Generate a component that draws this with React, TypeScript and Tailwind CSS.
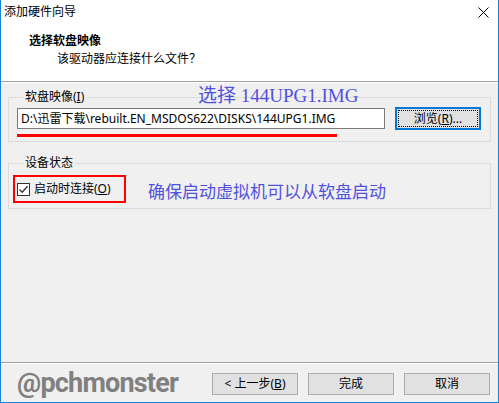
import React from "react";

const UI_FONT = "font-['Segoe_UI','Noto_Sans','Noto_Sans_CJK_SC',sans-serif]";

function WinButton({
  children,
  focused = false,
  className = "",
}: {
  children: React.ReactNode;
  focused?: boolean;
  className?: string;
}) {
  return (
    <button
      type="button"
      className={
        "flex h-[22px] items-center justify-center bg-[#e1e1e1] text-[12px] text-black " +
        (focused ? "border-2 border-[#0078d7] p-[1px]" : "border border-[#adadad]") +
        " " +
        className
      }
    >
      {focused ? (
        <span className="flex h-full w-full items-center justify-center border border-dotted border-black">
          {children}
        </span>
      ) : (
        children
      )}
    </button>
  );
}

function CloseIcon() {
  return (
    <svg width="11" height="11" viewBox="0 0 11 11" className="text-black">
      <path d="M0.5 0.5 L10.5 10.5 M10.5 0.5 L0.5 10.5" stroke="currentColor" strokeWidth="1" fill="none" />
    </svg>
  );
}

export default function App() {
  return (
    <div
      className={`flex h-[403px] w-[499px] flex-col border-x border-b border-[#1883d7] bg-[#f0f0f0] ${UI_FONT} text-[12px] leading-[16px] text-black`}
    >
      {/* Header */}
      <div className="flex h-[81px] flex-col bg-white">
        <div className="flex items-center justify-between pl-[3px] pr-[9px] pt-[4px]">
          <span>添加硬件向导</span>
          <CloseIcon />
        </div>
        <div className="mt-[13px] pl-[28px] font-bold">选择软盘映像</div>
        <div className="mt-[2px] pl-[56px]">该驱动器应连接什么文件？</div>
      </div>
      <div className="h-[2px] border-t border-[#a0a0a0] bg-white" />

      {/* Body */}
      <div className="relative flex flex-1 flex-col gap-[13px] px-[7px] pt-[6px]">
        <fieldset className="h-[53px] border border-[#dcdcdc] px-[8px] pb-[6px]">
          <legend className="ml-[6px] px-[2px]">
            软盘映像(<span className="underline">I</span>)
          </legend>
          <div className="mt-[2px] flex items-center gap-[10px]">
            <div className="flex h-[21px] w-[368px] items-center border border-[#7a7a7a] bg-white px-[3px]">
              D:\迅雷下载\rebuilt.EN_MSDOS622\DISKS\144UPG1.IMG
            </div>
            <WinButton focused className="h-[23px] w-[86px]">
              浏览(<span className="underline">R</span>)...
            </WinButton>
          </div>
          <div className="mt-[4px] h-[3px] w-[320px] bg-[#ff0000]" />
        </fieldset>

        <fieldset className="h-[54px] border border-[#dcdcdc] px-[8px]">
          <legend className="ml-[6px] px-[2px]">设备状态</legend>
          <div className="mt-[4px] flex items-start">
            <div className="-ml-[4px] flex h-[28px] w-[113px] items-center gap-[4px] border-2 border-[#ff0000] pl-[2px]">
              <span className="flex h-[13px] w-[13px] items-center justify-center border border-[#333] bg-white">
                <svg width="11" height="11" viewBox="0 0 11 11">
                  <path d="M1.5 5.5 L4.2 8.2 L9.5 2.2" stroke="#333" strokeWidth="1.3" fill="none" />
                </svg>
              </span>
              <span>
                启动时连接(<span className="underline">O</span>)
              </span>
            </div>
            <span className="ml-[22px] mt-[7px] font-['Liberation_Serif','Noto_Sans_CJK_SC',serif] text-[17px] leading-[22px] text-[#5050dc]">
              确保启动虚拟机可以从软盘启动
            </span>
          </div>
        </fieldset>

        {/* annotation over the first group's frame */}
        <span className="absolute left-[197px] top-[2px] font-['Liberation_Serif','Noto_Sans_CJK_SC',serif] text-[19px] leading-[22px] text-[#5050dc]">
          选择 144UPG1.IMG
        </span>
      </div>

      {/* Footer */}
      <div className="h-[2px] border-t border-[#a0a0a0] bg-white" />
      <div className="flex h-[38px] items-center pl-[16px] pr-[8px]">
        <span className="font-['Roboto',sans-serif] text-[27px] font-bold leading-none tracking-[-0.8px] text-[#808080]">
          @pchmonster
        </span>
        <div className="ml-auto flex gap-[10px] pt-[2px]">
          <WinButton className="w-[86px]">
            &lt; 上一步(<span className="underline">B</span>)
          </WinButton>
          <WinButton className="w-[86px]">完成</WinButton>
          <WinButton className="w-[86px]">取消</WinButton>
        </div>
      </div>
    </div>
  );
}
